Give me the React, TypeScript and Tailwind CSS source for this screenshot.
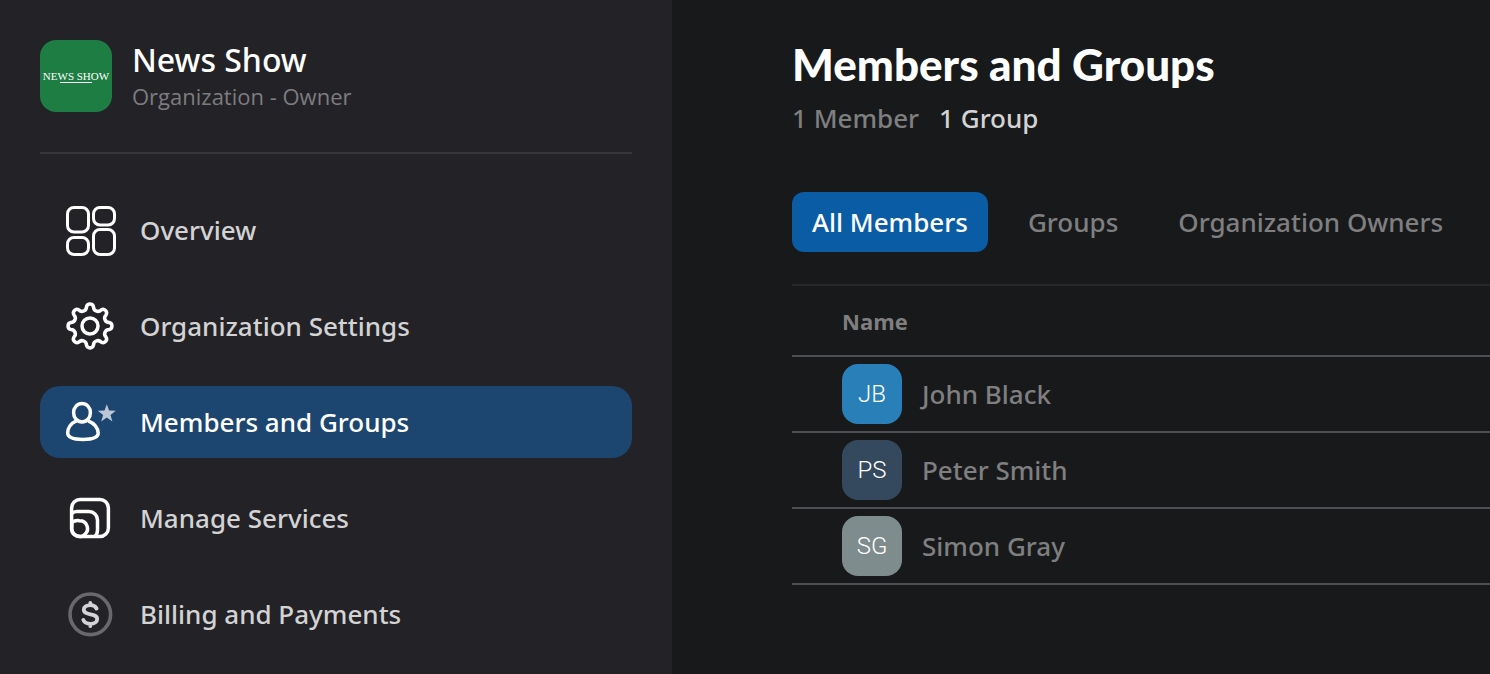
import type { ReactNode } from 'react'

function OverviewIcon() {
  return (
    <svg className="h-13 w-13 shrink-0" viewBox="0 0 52 52" fill="none" stroke="#fff" strokeWidth="3" aria-hidden="true">
      <rect x="3.5" y="3.5" width="21" height="24.5" rx="6.5" />
      <rect x="29.5" y="3.5" width="21" height="17.5" rx="6.5" />
      <rect x="3.5" y="33.5" width="21" height="17" rx="6.5" />
      <rect x="29.5" y="25.5" width="21" height="25" rx="6.5" />
    </svg>
  )
}

// Eight rounded teeth, each one the first tooth turned by 45 degrees
function gearPath() {
  const turn = (x: number, y: number, step: number) => {
    const a = (step * Math.PI) / 4
    const px = 26 + x * Math.cos(a) - y * Math.sin(a)
    const py = 26 + x * Math.sin(a) + y * Math.cos(a)
    return `${px.toFixed(2)} ${py.toFixed(2)}`
  }
  let d = `M${turn(-3.5, -19.2, 0)}`
  for (let i = 0; i < 8; i++) {
    d += `A3.6 3.6 0 0 1 ${turn(3.5, -19.2, i)}`
    d += `A4.4 4.4 0 0 0 ${turn(-3.5, -19.2, i + 1)}`
  }
  return d + 'Z'
}

function SettingsIcon() {
  return (
    <svg className="h-13 w-13 shrink-0" viewBox="0 0 52 52" fill="none" stroke="#fff" strokeWidth="3.5" strokeLinejoin="round" aria-hidden="true">
      <path d={gearPath()} />
      <circle cx="26" cy="26" r="8" />
    </svg>
  )
}

function MembersIcon() {
  return (
    <svg className="h-13 w-13 shrink-0" viewBox="0 0 52 52" fill="none" aria-hidden="true">
      <g stroke="#fff" strokeWidth="3.5" strokeLinejoin="round">
        <ellipse cx="18" cy="16.7" rx="8.4" ry="9.2" />
        <path d="M12.5 24.8C7.2 27 3.7 32 3.7 37c0 4.6 6.3 6.4 15.2 6.4S34.2 41.6 34.2 37c0-5-4.2-10-10-12.200" />
      </g>
      <path
        d="M42.8 8.2l2.300 6.300 6.700.2-5.300 4.200 1.900 6.500-5.600-3.800-5.600 3.800 1.900-6.500-5.300-4.200 6.700-.2z"
        fill="#bbc7d6"
      />
    </svg>
  )
}

function ServicesIcon() {
  return (
    <svg className="h-13 w-13 shrink-0" viewBox="0 0 52 52" fill="none" stroke="#fff" strokeWidth="3.5" aria-hidden="true">
      <rect x="7.6" y="7.6" width="36.8" height="36.8" rx="8.5" />
      <path d="M8 21.5c1.200-1.200 2.600-2 4.500-2h12.500a8.500 8.500 0 0 1 8.500 8.500v10c0 2.500-.8 4.800-2.500 6.500" />
      <path d="M8 30.5a9 9 0 0 1 7.500-1.800 7.800 7.800 0 0 1 5.500 13.500c-1 1-2.500 2-4 2.200-5 .5-9-2-9.400-7.400z" />
    </svg>
  )
}

function BillingIcon() {
  return (
    <svg className="h-13 w-13 shrink-0" viewBox="0 0 52 52" fill="none" strokeLinecap="round" aria-hidden="true">
      <circle cx="26.3" cy="26.3" r="20.3" stroke="#69696c" strokeWidth="3.6" />
      <path
        d="M32.600 20.600C31.600 18.400 29.300 17.200 26.300 17.200c-3.700 0-6.500 1.700-6.500 4.500 0 6.300 13.400 3 13.400 9.300 0 3-2.900 4.800-6.700 4.800-3.500 0-6.200-1.400-7.200-3.900M26.300 17v-2.200M26.300 36v2"
        stroke="#d4d4d5"
        strokeWidth="3.8"
      />
    </svg>
  )
}

const navItems: { label: string; icon: ReactNode; active?: boolean }[] = [
  { label: 'Overview', icon: <OverviewIcon /> },
  { label: 'Organization Settings', icon: <SettingsIcon /> },
  { label: 'Members and Groups', icon: <MembersIcon />, active: true },
  { label: 'Manage Services', icon: <ServicesIcon /> },
  { label: 'Billing and Payments', icon: <BillingIcon /> },
]

const tabs = ['All Members', 'Groups', 'Organization Owners']

const members = [
  { name: 'John Black', initials: 'JB', color: 'bg-[#2980b9]' },
  { name: 'Peter Smith', initials: 'PS', color: 'bg-[#34495e]' },
  { name: 'Simon Gray', initials: 'SG', color: 'bg-[#7f8c8d]' },
]

function Sidebar() {
  return (
    <aside className="w-2xl shrink-0 bg-[#232227] px-10 pt-10">
      <div className="flex items-center gap-5 border-b-2 border-[#36363b] pb-10">
        <div className="flex h-18 w-18 shrink-0 flex-col items-center justify-center rounded-2xl bg-[#1d7d42] text-white">
          <span className="font-['Liberation_Serif',serif] text-[11px] leading-3 whitespace-nowrap">NEWS SHOW</span>
          <span className="h-px w-8 bg-white" />
        </div>
        <div>
          <h2 className="text-[32px] leading-10 font-medium text-white">News Show</h2>
          <p className="font-['Open_Sans',sans-serif] text-[22px] leading-8 text-[#7d7d7f]">Organization - Owner</p>
        </div>
      </div>

      <nav className="flex flex-col gap-6 pt-10">
        {navItems.map((item) => (
          <a
            key={item.label}
            href="#"
            aria-current={item.active ? 'page' : undefined}
            className={`flex h-18 items-center gap-6 rounded-[20px] px-6 text-[26px] leading-9 font-medium whitespace-nowrap ${
              item.active ? 'bg-[#1c4670] text-white' : 'text-[#d3d3d4]'
            }`}
          >
            {item.icon}
            {item.label}
          </a>
        ))}
      </nav>
    </aside>
  )
}

export default function App() {
  return (
    <div className="flex min-h-screen overflow-hidden bg-[#18191b] font-['Noto_Sans','Open_Sans',sans-serif]">
      <Sidebar />

      <main className="min-w-0 flex-1 pt-10 pl-30">
        <h1 className="font-[Lato,sans-serif] text-[44px] leading-12 font-black whitespace-nowrap text-white">
          Members and Groups
        </h1>
        <div className="flex gap-5 pt-3 text-[26px] leading-9 font-medium">
          <span className="text-[#7f7f80]">1 Member</span>
          <span className="text-[#d3d3d4]">1 Group</span>
        </div>

        <div role="tablist" className="flex gap-5 border-b-2 border-[#27282c] pt-14 pb-8">
          {tabs.map((tab, index) => (
            <button
              key={tab}
              type="button"
              role="tab"
              aria-selected={index === 0}
              className={`h-15 shrink-0 rounded-xl px-5 text-[26px] leading-9 font-medium whitespace-nowrap ${
                index === 0 ? 'bg-[#0a5da5] text-white' : 'text-[#7f7f80]'
              }`}
            >
              {tab}
            </button>
          ))}
        </div>

        <table className="w-full border-separate border-spacing-0">
          <thead>
            <tr>
              <th className="h-[71px] border-b-2 border-[#4d4e53] p-0 pl-[50px] text-left font-['Open_Sans',sans-serif] text-[22px] leading-8 font-bold text-[#7f7f80]">
                Name
              </th>
            </tr>
          </thead>
          <tbody>
            {members.map((member) => (
              <tr key={member.name}>
                <td className="border-b-2 border-[#4d4e53] py-[7px] pr-0 pl-[50px]">
                  <div className="flex items-center gap-5">
                    <span
                      className={`flex h-15 w-15 items-center justify-center rounded-2xl font-[Roboto,sans-serif] text-[24px] leading-8 font-light text-white ${member.color}`}
                    >
                      {member.initials}
                    </span>
                    <span className="text-[26px] leading-9 font-medium text-[#7f7f80]">{member.name}</span>
                  </div>
                </td>
              </tr>
            ))}
          </tbody>
        </table>
      </main>
    </div>
  )
}
